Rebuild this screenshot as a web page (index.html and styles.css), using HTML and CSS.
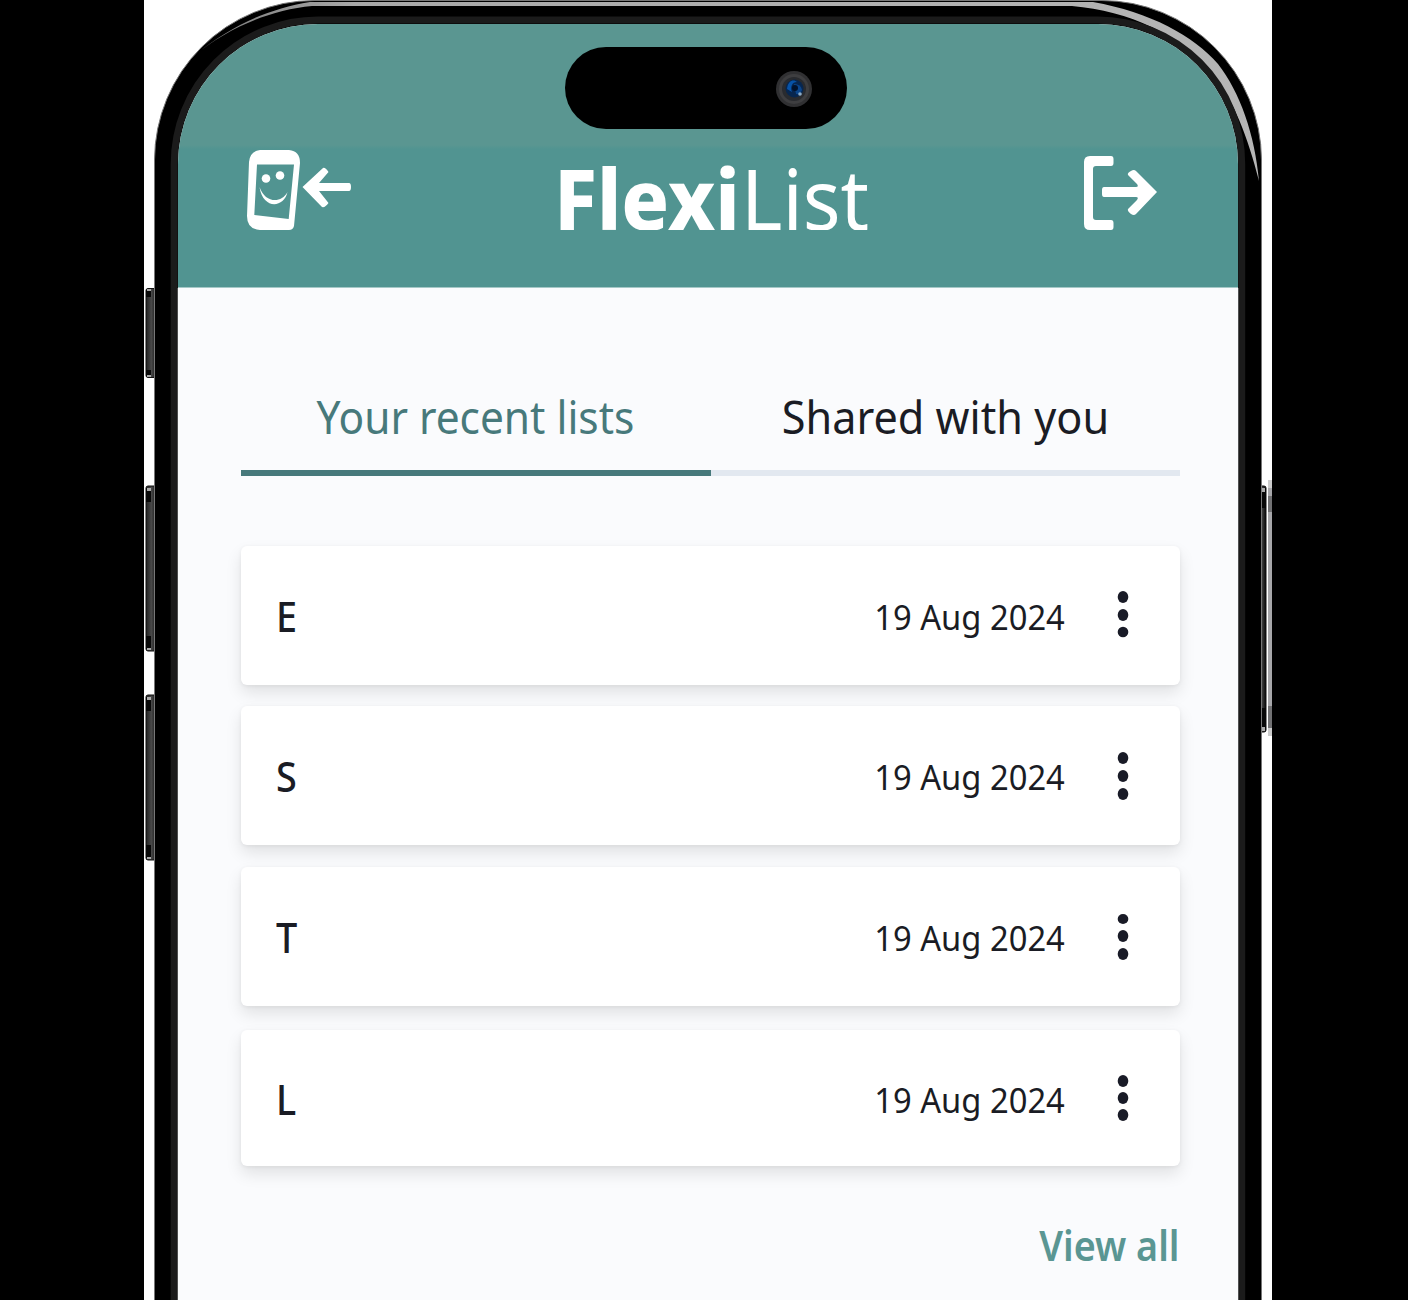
FILE: index.html
```html
<!DOCTYPE html>
<html lang="en">
<head>
<meta charset="utf-8">
<title>FlexiList</title>
<link rel="stylesheet" href="styles.css">
</head>
<body>
<main class="stage">
  <svg class="device" viewBox="144 0 1128 1300" aria-hidden="true">
    <defs>
      <linearGradient id="key" x1="0" x2="1" y1="0" y2="0">
        <stop offset="0" stop-color="#222"/><stop offset=".45" stop-color="#484848"/><stop offset="1" stop-color="#050505"/>
      </linearGradient>
      <linearGradient id="rim" x1="0" x2="1" y1="0" y2="0">
        <stop offset="0" stop-color="#777"/><stop offset=".15" stop-color="#a8a8a8"/><stop offset="1" stop-color="#b5b5b5"/>
      </linearGradient>
    </defs>
    <g fill="url(#key)" stroke="#111" stroke-width="1">
      <rect x="146" y="288.500" width="12" height="89" rx="2"/>
      <rect x="146" y="486" width="12" height="165" rx="2"/>
      <rect x="146" y="695" width="12" height="165" rx="2"/>
      <rect x="1258" y="486" width="8" height="246" rx="2"/>
    </g>
    <g fill="#080808">
      <path d="M146 290h5v7h-5zM146 370h5v6h-5zM146 488h5v14h-5zM146 636h5v13h-5zM146 697h5v14h-5zM146 845h5v13h-5zM1261 488h5v20h-5zM1261 708h5v20h-5z"/>
    </g>
    <g fill="#aaa">
      <path d="M147 289h4v2h-4zM147 375h4v2h-4zM147 488h4v3h-4zM147 648h4v2h-4zM147 697h4v3h-4zM147 857h4v2h-4zM1262 488h3v4h-3zM1262 727h3v4h-3z"/>
    </g>
    <path fill="#a7a7aa" d="M1268 488h4v240h-4z"/>
    <path fill="#727274" d="M1268 496h4v16h-4zM1268 706h4v22h-4z"/>
    <path fill="#ccc" d="M1268 480h4v8h-4zM1268 728h4v8h-4z"/>
    <path d="M154.500 1301V160A160 160 0 0 1 314.500 .5H1101.500A160 160 0 0 1 1261.500 160V1301Z" stroke="#777" stroke-width="1"/>
    <path fill="url(#rim)" d="M195 55C232 25 268 9 310 2H1093C1150 12 1194 36 1218 64C1240 92 1255 135 1259 181C1248 138 1234 100 1211 71C1180 35 1130 11 1072 6H312C270 10 228 28 195 55Z"/>
    <path fill="none" stroke="#1b1b1b" stroke-width="7" d="M174.200 1301V164A144 144 0 0 1 318 20H1098A144 144 0 0 1 1241.700 164V1301"/>
    <path fill="none" stroke="#8a8c8d" stroke-width="1" d="M178 1301V288M1238 1301V288"/>
  </svg>
  <section class="screen">
    <header class="header">
      <div class="island">
        <svg viewBox="0 0 38 38" class="camera" aria-hidden="true">
          <circle cx="19" cy="19" r="18" fill="#303032"/><circle cx="19" cy="19" r="15" fill="#3e3e40"/><circle cx="19" cy="19" r="12" fill="#292b2f"/>
          <circle cx="19.500" cy="18.500" r="9" fill="#07264f"/><path d="M12 19C13 10 19 9 22 12C17 12 15 17 17 22Z" fill="#0753a8"/><path d="M19 14q7 0 8 6q-2 5-6 4z" fill="#0a458c"/><circle cx="20" cy="18" r="3" fill="#02132d"/><circle cx="25" cy="24" r="1.800" fill="#8cabc6"/>
        </svg>
      </div>
      <div class="toolbar">
        <svg class="phone-icon" viewBox="246 149 106 82" aria-label="Back">
          <path fill="#fff" fill-rule="evenodd" d="M260 150H289Q300 151 300 163L294 226Q293 230 289 230H260Q247 229 247 216L249 162Q250 151 260 150ZM257 164.500L254.300 215L288.700 219L294 164.500Z"/>
          <circle cx="266" cy="178.500" r="4.300" fill="#fff"/><circle cx="280" cy="175.500" r="4.300" fill="#fff"/>
          <path fill="#fff" d="M259.500 187C265 203 281 204 287.500 192C284 208 263 210 259.500 187Z"/>
          <path fill="#fff" d="M302.500 187L323 168Q325 167 328.500 172L319 183H349Q351 183 351 187Q351 191 349 191H319L328.500 203Q325 208 322 207Z"/>
        </svg>
        <h1 class="brand"><b class="brand-bold">Flexi</b><span class="brand-light">List</span></h1>
        <svg class="exit-icon" viewBox="1083 155 75 76" aria-label="Sign out">
          <path fill="#fff" d="M1090 156H1111Q1113.500 156 1113.500 159V163Q1113.500 166 1111 166H1096Q1093 166 1093 169V217Q1093 220 1096 220H1111Q1113.500 220 1113.500 223V227Q1113.500 230 1111 230H1090Q1084 230 1084 224V162Q1084 156 1090 156Z"/>
          <path fill="#fff" d="M1104 187H1136Q1139 187 1137 184L1128 175Q1127 173 1131 171Q1134 169 1136 171L1157 192L1136 214Q1134 216 1131 214Q1127 211 1128 209L1137 200Q1139 197 1136 197H1104Q1102 197 1102 194V190Q1102 187 1104 187Z"/>
        </svg>
      </div>
    </header>
    <div class="content">
      <nav class="tabs">
        <a class="tab tab-active"><span class="tab-label">Your recent lists</span></a>
        <a class="tab"><span class="tab-label tab-label-wide">Shared with you</span></a>
      </nav>
      <ul class="lists">
        <li class="card"><span class="name">E</span><time class="date">19 Aug 2024</time><svg class="more" viewBox="0 0 12 50"><ellipse cx="6" cy="6" rx="5.300" ry="6"/><ellipse cx="6" cy="24" rx="5.300" ry="6"/><ellipse cx="6" cy="41" rx="5.300" ry="5.300"/></svg></li>
        <li class="card"><span class="name">S</span><time class="date">19 Aug 2024</time><svg class="more" viewBox="0 0 12 50"><ellipse cx="6" cy="7" rx="5.300" ry="6"/><ellipse cx="6" cy="25" rx="5.300" ry="6"/><ellipse cx="6" cy="43" rx="5.300" ry="6"/></svg></li>
        <li class="card card-third"><span class="name">T</span><time class="date">19 Aug 2024</time><svg class="more" viewBox="0 0 12 50"><ellipse cx="6" cy="7" rx="5.300" ry="5"/><ellipse cx="6" cy="24" rx="5.300" ry="6"/><ellipse cx="6" cy="42" rx="5.300" ry="6"/></svg></li>
        <li class="card card-last"><span class="name">L</span><time class="date">19 Aug 2024</time><svg class="more" viewBox="0 0 12 50"><ellipse cx="6" cy="8" rx="5.300" ry="6"/><ellipse cx="6" cy="25" rx="5.300" ry="6"/><ellipse cx="6" cy="42" rx="5.300" ry="6"/></svg></li>
      </ul>
      <a class="view-all">View all</a>
    </div>
  </section>
</main>
</body>
</html>
```
FILE: styles.css
```css
* { box-sizing: border-box; }
body { margin: 0; background: #000; font-family: "Noto Sans", "Open Sans", sans-serif; color: #1a1c24; }
.stage { position: relative; width: 1128px; height: 1300px; margin-left: 144px; padding: 24px 34px 0; background: #fff; overflow: hidden; }
.device { position: absolute; left: 0; top: 0; width: 1128px; height: 1300px; }
.screen { position: relative; width: 1060px; height: 1276px; border-radius: 140px 140px 0 0; background: #fafbfd; overflow: hidden; }
.header { height: 264px; padding-top: 23px; background: linear-gradient(#5a9691 0, #5a9691 121px, #519491 125px, #519491 100%); border-bottom: 1px solid #a5c8c7; }
.island { width: 282px; height: 82px; margin-left: 387px; border-radius: 41px; background: #000; padding: 23px 0 0 210px; }
.camera { display: block; width: 38px; height: 38px; }
.toolbar { display: flex; align-items: flex-start; padding: 20px 80px 0 68px; }
.phone-icon { width: 106px; height: 82px; flex: none; }
.brand { height: 92px; margin: 3px 0 -14px 202px; display: flex; color: #fff; font-size: 84px; line-height: 92px; font-weight: 400; white-space: nowrap; clip-path: inset(0 0 14px 0); }
.brand-bold { font-weight: 800; width: 187px; transform: scaleX(.94); transform-origin: left; }
.brand-light { font-weight: 400; transform: scaleX(.94); transform-origin: left; }
.exit-icon { width: 75px; height: 76px; flex: none; margin: 6px 0 0 auto; }
.content { display: flex; flex-direction: column; padding: 94px 58px 0 63px; }
.tabs { display: flex; height: 94px; }
.tab { flex: 1; display: flex; justify-content: center; border-bottom: 6px solid #e2e8f0; font-size: 45px; line-height: 70px; font-weight: 400; white-space: nowrap; }
.tab-label { transform: scaleX(.943); }
.tab-label-wide { transform: scaleX(.96); }
.tab-active { color: #47797b; border-color: #47797b; }
.lists { list-style: none; margin: 70px 0 0; padding: 0; display: flex; flex-direction: column; gap: 21px; }
.card { height: 139px; display: flex; align-items: center; padding: 0 51px 0 35px; background: #fff; border-radius: 6px; box-shadow: 0 8px 16px rgba(0,0,0,.1), 0 1px 4px rgba(0,0,0,.06); }
.card-third { margin-top: 1px; }
.card-last { height: 136px; margin-top: 3px; }
.name { font-weight: 550; font-size: 42px; line-height: 50px; padding-top: 1px; transform: scaleX(.9); transform-origin: left; }
.date { margin-left: auto; font-size: 35px; line-height: 44px; font-weight: 400; padding-top: 3px; white-space: nowrap; transform: scaleX(.935); transform-origin: right; }
.more { width: 12px; height: 50px; margin-left: 52px; fill: #191b27; }
.view-all { align-self: flex-end; margin-top: 49px; color: #5a9693; font-size: 41px; line-height: 60px; font-weight: 580; transform: scaleX(.92); transform-origin: right; }
```
